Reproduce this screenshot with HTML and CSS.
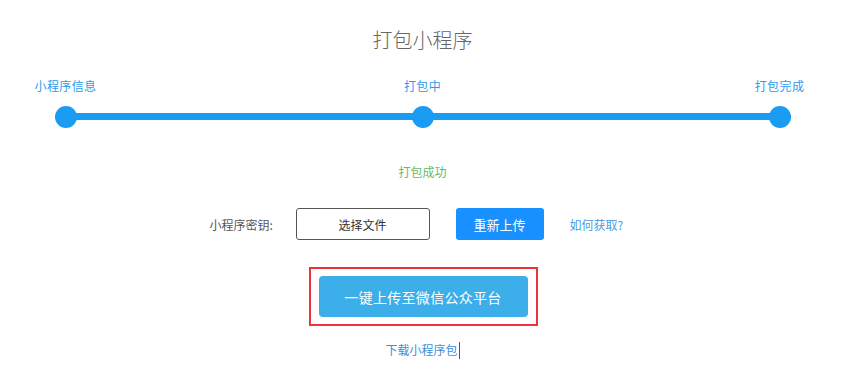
FILE: index.html
```html
<!DOCTYPE html>
<html>
	<head>
		<meta charset="utf-8">
		<link rel="stylesheet" href="styles.css">
	</head>
	<body>
		<div class="page">
			<h1 class="title">打包小程序</h1>

			<div class="steps">
				<div class="steps_line"></div>
				<div class="step">
					<div class="step_label">小程序信息</div>
					<div class="step_dot"></div>
				</div>
				<div class="step">
					<div class="step_label">打包中</div>
					<div class="step_dot"></div>
				</div>
				<div class="step">
					<div class="step_label">打包完成</div>
					<div class="step_dot"></div>
				</div>
			</div>

			<div class="status">打包成功</div>

			<div class="key_row">
				<span class="key_label">小程序密钥:</span>
				<button class="file_btn">选择文件</button>
				<button class="reupload_btn">重新上传</button>
				<a class="help_link" href="#">如何获取?</a>
			</div>

			<div class="upload_wrap">
				<div class="upload_box">
					<button class="upload_btn">一键上传至微信公众平台</button>
				</div>
			</div>

			<div class="download">
				<a class="download_link" href="#">下载小程序包</a><span class="caret"></span>
			</div>
		</div>
	</body>
</html>
```

FILE: styles.css
```css
body {
	margin: 0;
	background: #fff;
	font-family: "Noto Sans CJK SC", "Noto Sans", sans-serif;
	font-size: 12px;
}

.page {
	width: 845px;
}

.title {
	margin: 0;
	padding-top: 28px;
	font-size: 20px;
	font-weight: 300;
	line-height: 24px;
	color: #666;
	text-align: center;
}

.steps {
	position: relative;
	width: 776px;
	margin: 26px auto 0;
	display: flex;
	justify-content: space-between;
}
.steps_line {
	position: absolute;
	left: 31px;
	right: 31px;
	top: 35px;
	height: 7px;
	background: #1a9cf3;
}
.step {
	position: relative;
	width: 62px;
	display: flex;
	flex-direction: column;
	align-items: center;
}
.step_label {
	line-height: 16px;
	color: #2a9cef;
	white-space: nowrap;
	letter-spacing: 0.4px;
}
.step_dot {
	width: 22px;
	height: 22px;
	margin-top: 12px;
	border-radius: 50%;
	background: #1a9cf3;
}

.status {
	margin-top: 36px;
	line-height: 16px;
	color: #66bb66;
	text-align: center;
}

.key_row {
	margin-top: 28px;
	padding-right: 9px;
	display: flex;
	justify-content: center;
	align-items: center;
	height: 32px;
}
.key_label {
	width: 70px;
	color: #555;
}
.file_btn {
	width: 134px;
	height: 32px;
	margin-left: 16px;
	border: 1px solid #555;
	border-radius: 3px;
	background: #fff;
	color: #333;
	font-family: inherit;
	font-size: 12px;
}
.reupload_btn {
	width: 88px;
	height: 32px;
	margin-left: 26px;
	border: none;
	border-radius: 3px;
	background: #1890ff;
	color: #fff;
	font-family: inherit;
	font-size: 13px;
}
.help_link {
	width: 57px;
	margin-left: 26px;
	color: #4a9be6;
	text-decoration: none;
	white-space: nowrap;
}

.upload_wrap {
	margin-top: 27px;
	display: flex;
	justify-content: center;
}
.upload_box {
	margin-left: 1px;
	padding: 7px 8px;
	border: 2px solid #e8343a;
}
.upload_btn {
	display: block;
	width: 209px;
	height: 41px;
	border: none;
	border-radius: 4px;
	background: #3caeea;
	color: #fff;
	font-family: inherit;
	font-size: 14px;
	letter-spacing: 0.3px;
}

.download {
	margin-top: 16px;
	line-height: 16px;
	text-align: center;
}
.download_link {
	color: #3d8fdc;
	text-decoration: none;
}
.caret {
	display: inline-block;
	width: 1px;
	height: 17px;
	margin-left: 1px;
	vertical-align: -4px;
	background: #2a5f9a;
}
```
